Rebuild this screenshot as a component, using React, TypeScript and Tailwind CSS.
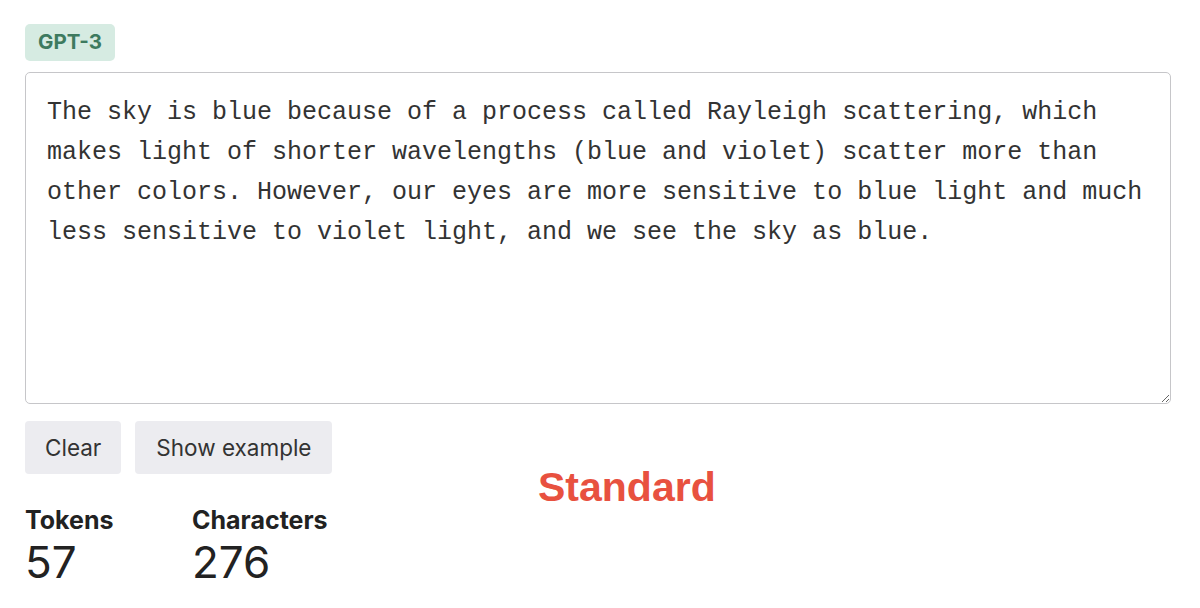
import React, { useState } from "react";

const SAMPLE =
  "The sky is blue because of a process called Rayleigh scattering, which makes light of shorter wavelengths (blue and violet) scatter more than other colors. However, our eyes are more sensitive to blue light and much less sensitive to violet light, and we see the sky as blue.\n";

const ui = { fontFamily: "Inter, 'Noto Sans', sans-serif" };
const mono = { fontFamily: "'Liberation Mono', 'DejaVu Sans Mono', monospace" };

export default function App() {
  const [text, setText] = useState(SAMPLE);
  const tokens = text.trim().length ? 57 : 0;

  return (
    <div className="relative min-h-[608px] bg-white px-[25px] pt-[24px] text-[#222]" style={ui}>
      <span className="inline-flex h-[37px] items-center rounded-[5px] bg-[#d6ebe2] px-[13px] text-[20.5px] font-bold text-[#3d7a5f]">
        GPT-3
      </span>

      <textarea
        value={text}
        onChange={(e) => setText(e.target.value)}
        spellCheck={false}
        className="mt-[11px] block h-[332px] w-[1146px] resize-y rounded-[5px] border border-[#c6c6c9] px-[21px] pt-[20px] pb-[16px] text-[25px] leading-[40px] text-[#333] outline-none"
        style={mono}
      />

      <div className="mt-[17px] flex gap-[14px]">
        <button
          onClick={() => setText("")}
          className="h-[53px] rounded-[4px] bg-[#ececf0] px-[20px] text-[22.5px] text-[#333]"
        >
          Clear
        </button>
        <button
          onClick={() => setText(SAMPLE)}
          className="h-[53px] rounded-[4px] bg-[#ececf0] px-[21px] text-[22.5px] text-[#333]"
        >
          Show example
        </button>
      </div>

      <div className="mt-[32px] flex">
        <div className="w-[167px]">
          <div className="text-[25px] font-bold leading-[28px]">Tokens</div>
          <div className="text-[44px] leading-[56px]">{tokens}</div>
        </div>
        <div>
          <div className="text-[25px] font-bold leading-[28px]">Characters</div>
          <div className="text-[44px] leading-[56px]">{text.length}</div>
        </div>
      </div>

      <div
        className="absolute left-[538px] top-[463px] text-[41px] font-bold leading-[48px] text-[#e8513f]"
        style={{ fontFamily: "'Liberation Sans', Arial, sans-serif" }}
      >
        Standard
      </div>
    </div>
  );
}
